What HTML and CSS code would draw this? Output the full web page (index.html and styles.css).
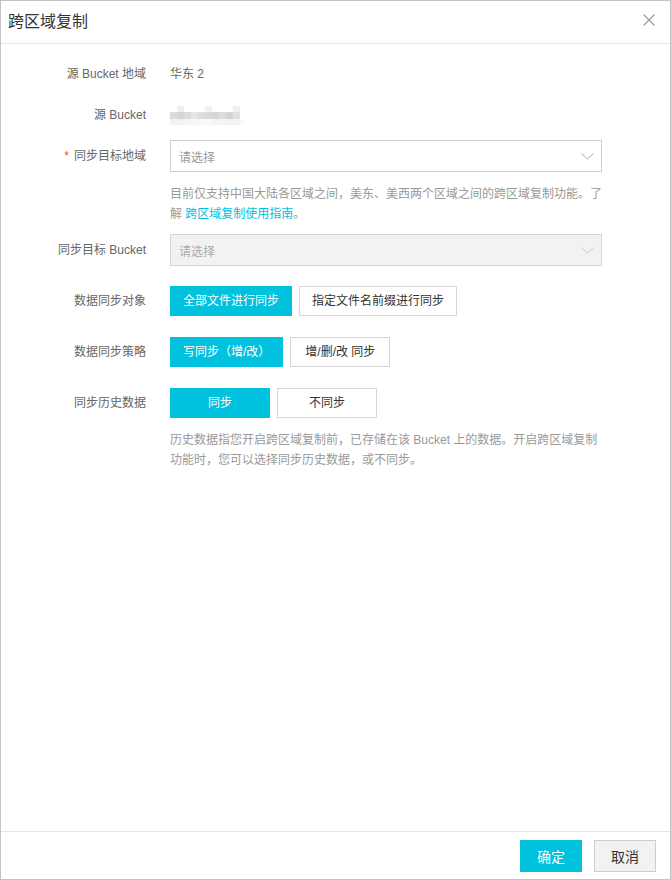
FILE: index.html
```html
<!DOCTYPE html>
<html lang="zh-CN">
<head>
<meta charset="utf-8">
<title>跨区域复制</title>
<link rel="stylesheet" href="styles.css">
</head>
<body>
<div class="dialog">
  <header class="dialog-header">
    <h1 class="dialog-title">跨区域复制</h1>
    <button class="close" aria-label="关闭">
      <svg width="12" height="12" viewBox="0 0 12 12"><path d="M0.5 0.5 L11.5 11.5 M11.5 0.5 L0.5 11.5" stroke="#9a9a9a" stroke-width="1.1" fill="none"/></svg>
    </button>
  </header>

  <main class="dialog-body">
    <div class="row row-first">
      <div class="label">源 Bucket 地域</div>
      <div class="value">华东 2</div>
    </div>

    <div class="row row-tight">
      <div class="label">源 Bucket</div>
      <div class="value">
        <div class="blur">
          <div class="blur-row blur-a"></div>
          <div class="blur-row blur-b"></div>
          <div class="blur-row blur-c"></div>
        </div>
      </div>
    </div>

    <div class="row row-tight">
      <div class="label"><span class="req">*</span>同步目标地域</div>
      <div class="control">
        <div class="select">
          <span class="placeholder">请选择</span>
          <svg class="chev" width="13" height="7" viewBox="0 0 13 7"><path d="M0.5 0.5 L6.5 6 L12.5 0.5" stroke="#a8a8a8" stroke-width="1" fill="none"/></svg>
        </div>
        <p class="help"><span class="help-line">目前仅支持中国大陆各区域之间，美东、美西两个区域之间的跨区域复制功能。了</span><span class="help-line">解 <a class="link" href="#">跨区域复制使用指南</a>。</span></p>
      </div>
    </div>

    <div class="row row-after-help">
      <div class="label">同步目标 Bucket</div>
      <div class="control">
        <div class="select select-disabled">
          <span class="placeholder">请选择</span>
          <svg class="chev" width="13" height="7" viewBox="0 0 13 7"><path d="M0.5 0.5 L6.5 6 L12.5 0.5" stroke="#c8c8c8" stroke-width="1" fill="none"/></svg>
        </div>
      </div>
    </div>

    <div class="row row-btns row-btns-first">
      <div class="label">数据同步对象</div>
      <div class="btn-group">
        <button class="btn btn-primary">全部文件进行同步</button>
        <button class="btn">指定文件名前缀进行同步</button>
      </div>
    </div>

    <div class="row row-btns">
      <div class="label">数据同步策略</div>
      <div class="btn-group">
        <button class="btn btn-primary">写同步（增/改）</button>
        <button class="btn">增/删/改 同步</button>
      </div>
    </div>

    <div class="row row-btns">
      <div class="label">同步历史数据</div>
      <div class="control">
        <div class="btn-group">
          <button class="btn btn-primary">同步</button>
          <button class="btn">不同步</button>
        </div>
        <p class="help">历史数据指您开启跨区域复制前，已存储在该 Bucket 上的数据。开启跨区域复制功能时，您可以选择同步历史数据，或不同步。</p>
      </div>
    </div>
  </main>

  <footer class="dialog-footer">
    <button class="fbtn fbtn-primary">确定</button>
    <button class="fbtn fbtn-default">取消</button>
  </footer>
</div>
</body>
</html>
```

FILE: styles.css
```css
* { box-sizing: border-box; }

html, body {
  margin: 0;
  padding: 0;
  background: #fff;
}

body {
  font-family: "Liberation Sans", "Noto Sans CJK SC", sans-serif;
  font-size: 12px;
  color: #333;
}

.dialog {
  width: 671px;
  height: 880px;
  border: 1px solid #c4c4c4;
  display: flex;
  flex-direction: column;
  background: #fff;
}

.dialog-header {
  height: 43px;
  border-bottom: 1px solid #e5e5e5;
  display: flex;
  align-items: center;
  justify-content: space-between;
  padding: 0 15px 0 7px;
  flex: none;
}

.dialog-title {
  margin: 0;
  font-size: 16px;
  font-weight: normal;
  color: #333;
  line-height: 20px;
}

.close {
  border: 0;
  background: none;
  padding: 0;
  width: 12px;
  height: 12px;
  display: flex;
  margin-top: -4px;
}

.dialog-body {
  flex: 1;
  display: flex;
  flex-direction: column;
  padding-top: 15px;
}

.row {
  display: grid;
  grid-template-columns: 145px 432px;
  column-gap: 24px;
  align-items: start;
}

.row-tight { margin-top: 9px; }
.row-after-help { margin-top: 10px; }
.row-btns { margin-top: 21px; }
.row-btns-first { margin-top: 20px; }

.label {
  text-align: right;
  color: #666;
  line-height: 32px;
  white-space: nowrap;
}

.row-btns .label { line-height: 30px; }

.req {
  color: #e84b3c;
  margin-right: 5px;
  font-size: 12px;
}

.value {
  line-height: 32px;
  color: #666;
  height: 32px;
  display: flex;
  align-items: center;
}

.row-first .value, .row-first .label { margin-top: -1px; }

.blur {
  display: flex;
  flex-direction: column;
  width: 76px;
  margin-top: 1px;
}

.blur-row { height: 6px; }

.blur-a {
  background: linear-gradient(to right,
    #fff 0 7px, #efefef 7px 14px, #fff 14px 35px, #f1f1f1 35px 42px,
    #fff 42px 63px, #f0f0f0 63px 70px, #fff 70px);
}

.blur-b {
  height: 7px;
  background: linear-gradient(to right,
    #dcdcdc 0 7px, #d6d6d6 7px 14px, #dadada 14px 21px, #e4e6e8 21px 28px,
    #dcdde0 28px 35px, #d9d9da 35px 42px, #d6d6d6 42px 49px, #dddcdc 49px 56px,
    #d4d4d4 56px 63px, #e1e1e1 63px 70px, #fff 70px);
}

.blur-c {
  background: linear-gradient(to right,
    #f3f3f3 0 14px, #f6f6f6 14px 28px, #f9f9f9 28px 42px, #f5f5f5 42px 56px,
    #f3f3f3 56px 70px, #fafafa 70px 75px, #fff 75px);
}

.control { display: flex; flex-direction: column; }

.select {
  height: 32px;
  border: 1px solid #cfcfcf;
  background: #fff;
  display: flex;
  align-items: center;
  justify-content: space-between;
  padding: 0 7px 0 8px;
}

.select-disabled { background: #f2f2f2; border-color: #d5d5d5; }

.placeholder { color: #999; }
.select-disabled .placeholder { color: #aaa; }

.chev { display: block; margin-top: 1px; }

.help {
  margin: 12px 0 0;
  line-height: 20px;
  color: #999;
  width: 432px;
}

.help-line { display: block; white-space: nowrap; }

.link {
  color: #00c1de;
  text-decoration: none;
}

.btn-group {
  display: flex;
  gap: 7px;
}

.btn {
  height: 30px;
  min-width: 100px;
  padding: 0 12px;
  border: 1px solid #d7d7d7;
  background: #fff;
  color: #333;
  font-family: inherit;
  font-size: 12px;
  line-height: 28px;
  white-space: nowrap;
}

.btn-primary {
  background: #00c1de;
  border-color: #00c1de;
  color: #fff;
}

.dialog-footer {
  flex: none;
  border-top: 1px solid #e5e5e5;
  display: flex;
  justify-content: flex-end;
  gap: 12px;
  padding: 8px 14px 7px 0;
}

.fbtn {
  width: 62px;
  height: 32px;
  font-family: inherit;
  font-size: 14px;
  border: 1px solid transparent;
  padding: 0;
}

.fbtn-primary {
  background: #00c1de;
  border-color: #00c1de;
  color: #fff;
}

.fbtn-default {
  background: #f2f2f2;
  border-color: #cdcdcd;
  color: #333;
}
```
